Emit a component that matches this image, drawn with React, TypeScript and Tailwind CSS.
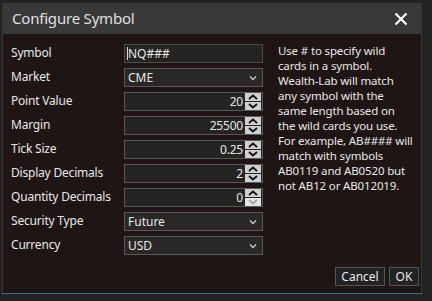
import React from "react";

const font = { fontFamily: '"Noto Sans", "Open Sans", sans-serif' };

function Chevron({ up, disabled }: { up: boolean; disabled?: boolean }) {
  return (
    <div className={`flex items-center justify-center h-[8px] ${disabled ? "bg-[#e6e6e6]" : "bg-[#d0d0d0]"}`}>
      <svg width="10" height="6" viewBox="0 0 10 6">
        <path
          d={up ? "M1 5 L5 1.5 L9 5" : "M1 1 L5 4.5 L9 1"}
          fill="none"
          stroke={disabled ? "#a0a0a0" : "#111"}
          strokeWidth="1.8"
        />
      </svg>
    </div>
  );
}

function NumInput({ value, downDisabled }: { value: string; downDisabled?: boolean }) {
  return (
    <div className="flex h-[19px] w-[139px] border border-[#585858] bg-[#262323] items-center">
      <div className="flex-1 text-right pr-[2px] text-[12px] tracking-[-0.2px] text-[#e6e6e6] leading-none">{value}</div>
      <div className="flex flex-col gap-[1px] w-[16px] mr-[1px]">
        <Chevron up />
        <Chevron up={false} disabled={downDisabled} />
      </div>
    </div>
  );
}

function Select({ value }: { value: string }) {
  return (
    <div className="flex h-[19px] w-[139px] border border-[#585858] bg-[#2a2727] items-center px-[3px]">
      <div className="flex-1 text-[12px] text-[#e6e6e6] leading-none">{value}</div>
      <svg width="8" height="6" viewBox="0 0 8 6" className="mr-[2px]">
        <path d="M1 1.5 L4 4.5 L7 1.5" fill="none" stroke="#cfcfcf" strokeWidth="1.3" />
      </svg>
    </div>
  );
}

function TextInput({ value }: { value: string }) {
  return (
    <div className="flex h-[19px] w-[139px] border border-[#4a4a4a] bg-[#262323] items-center pl-[2px]">
      <div className="w-[1px] h-[13px] bg-[#dcdcdc]" />
      <div className="text-[12px] text-[#e6e6e6] leading-none">{value}</div>
    </div>
  );
}

function Row({ label, children }: { label: string; children: React.ReactNode }) {
  return (
    <div className="flex items-center h-[19px]">
      <div className="w-[113px] -mt-[2px] text-[12px] tracking-[-0.2px] text-[#e8e8e8] leading-none">{label}</div>
      {children}
    </div>
  );
}

export default function App() {
  return (
    <div className="w-[432px] h-[301px] bg-[#232323] overflow-hidden" style={font}>
      <div className="h-[3px] overflow-hidden relative">
        <div className="flex text-[12px] text-[#cfcfcf] leading-[14px] -mt-[11px]">
          <span className="ml-[22px]">0</span>
          <span className="ml-[77px]">Future</span>
          <span className="ml-[46px]">USD</span>
        </div>
      </div>
      <div className="ml-[2px] w-[420px] bg-[#383838]">
        <div className="h-[31px] flex items-center pl-[10px] pr-[14px]">
          <div className="flex-1 text-[15px] tracking-[-0.2px] text-[#e0e0e0]">Configure Symbol</div>
          <svg width="14" height="14" viewBox="0 0 14 14">
            <path d="M1.5 1.5 L12.5 12.5 M12.5 1.5 L1.5 12.5" stroke="#ffffff" strokeWidth="2.2" />
          </svg>
        </div>
        <div className="ml-[1px] mr-[1px] h-[259px] bg-[#1f1515] flex flex-col">
          <div className="flex pt-[10px] pl-[8px]">
            <div className="flex flex-col gap-[5px]">
              <Row label="Symbol"><TextInput value="NQ###" /></Row>
              <Row label="Market"><Select value="CME" /></Row>
              <Row label="Point Value"><NumInput value="20" /></Row>
              <Row label="Margin"><NumInput value="25500" /></Row>
              <Row label="Tick Size"><NumInput value="0.25" /></Row>
              <Row label="Display Decimals"><NumInput value="2" /></Row>
              <Row label="Quantity Decimals"><NumInput value="0" downDisabled /></Row>
              <Row label="Security Type"><Select value="Future" /></Row>
              <Row label="Currency"><Select value="USD" /></Row>
            </div>
            <div className="ml-[15px] -mt-[1px] text-[11.5px] tracking-[-0.15px] leading-[15px] text-[#e8e8e8] w-[140px] whitespace-nowrap">
              <div>Use # to specify wild</div>
              <div>cards in a symbol.</div>
              <div>Wealth-Lab will match</div>
              <div>any symbol with the</div>
              <div>same length based on</div>
              <div>the wild cards you use.</div>
              <div>For example, AB#### will</div>
              <div>match with symbols</div>
              <div>AB0119 and AB0520 but</div>
              <div>not AB12 or AB012019.</div>
            </div>
          </div>
          <div className="flex justify-end gap-[4px] mt-[12px] pr-[2px]">
            <div className="h-[19px] w-[50px] border border-[#555] bg-[#222] flex items-center justify-center text-[12px] text-[#e8e8e8] leading-none">Cancel</div>
            <div className="h-[19px] w-[30px] border border-[#555] bg-[#222] flex items-center justify-center text-[12px] text-[#e8e8e8] leading-none">OK</div>
          </div>
        </div>
        <div className="h-[1px] bg-[#3d6e94]" />
      </div>
    </div>
  );
}
